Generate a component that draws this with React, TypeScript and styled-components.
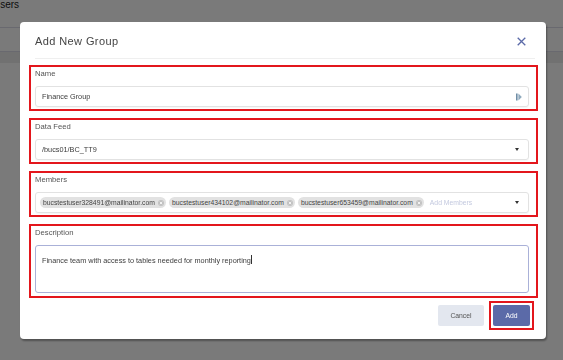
import React from 'react';
import styled, { createGlobalStyle } from 'styled-components';

const colors = {
    overlay: 'rgba(0, 0, 0, 0.52)',
    red: '#e3161c',
    blue: '#5b6aa8',
    text: '#3c3c3c',
    label: '#555',
    border: '#e2e2e2',
    chip: '#e2e2e2',
};

const GlobalStyle = createGlobalStyle`
    html, body {
        margin: 0;
        padding: 0;
        background: #fff;
        font-family: "Liberation Sans", Arial, sans-serif;
    }
`;

const Page = styled.div`
    width: 563px;
    height: 360px;
    overflow: hidden;
`;

const PageTitle = styled.div`
    margin-left: -7px;
    height: 28px;
    font-size: 10px;
    line-height: 9px;
    color: #222;
    border-bottom: 1px solid #dcdce8;
    box-sizing: border-box;
`;

const Toolbar = styled.div`
    height: 23px;
    border-bottom: 1px solid #dcdce8;
`;

const TableHead = styled.div`
    height: 11px;
    background: #ececec;
`;

const Overlay = styled.div`
    position: fixed;
    inset: 0;
    background: ${colors.overlay};
    padding: 22px 0 0 20px;
`;

const Modal = styled.div`
    width: 526px;
    background: #fff;
    border-radius: 4px;
    box-shadow: 1px 2px 2px rgba(0, 0, 0, 0.35);
    padding-bottom: 9px;
`;

const Header = styled.div`
    display: flex;
    align-items: center;
    justify-content: space-between;
    height: 37px;
    padding-top: 2px;
    box-sizing: border-box;
    margin: 0 11px 0 15px;
    border-bottom: 1px solid #efefef;
`;

const Title = styled.h2`
    margin: 0;
    font-size: 11px;
    font-weight: 400;
    letter-spacing: 0.4px;
    color: #444;
`;

const Close = styled.button`
    display: flex;
    border: none;
    background: none;
    padding: 0;
    margin-right: 9px;
    cursor: pointer;
`;

const Body = styled.div`
    display: flex;
    flex-direction: column;
    gap: 7px;
    padding: 6px 8px 0 9px;
`;

const Field = styled.div<{ tall?: boolean }>`
    border: 2px solid ${colors.red};
    padding: 1px 7px ${(p) => (p.tall ? 3 : 2)}px 4px;
`;

const Label = styled.div`
    font-size: 7.7px;
    line-height: 11px;
    color: ${colors.label};
    margin-bottom: 7px;
`;

const Control = styled.div<{ tall?: boolean; focused?: boolean }>`
    display: flex;
    align-items: ${(p) => (p.tall ? 'flex-start' : 'center')};
    box-sizing: border-box;
    height: ${(p) => (p.tall ? 48 : 21)}px;
    padding: ${(p) => (p.tall ? '9px 6px' : '0 6px 0 6px')};
    border: 1px solid ${(p) => (p.focused ? '#aab1d8' : colors.border)};
    border-radius: 3px;
    box-shadow: ${(p) => (p.focused ? 'none' : '0 1px 1px rgba(0,0,0,0.04)')};
    font-size: 7.3px;
    color: ${colors.text};
    gap: 3px;
`;

const Value = styled.span`
    flex: 1;
    white-space: nowrap;
`;

const Caret = styled.span`
    width: 0;
    height: 0;
    border-left: 2.5px solid transparent;
    border-right: 2.5px solid transparent;
    border-top: 3px solid #333;
    margin-right: 3px;
`;

const Chip = styled.span`
    display: inline-flex;
    align-items: center;
    gap: 3px;
    height: 11px;
    padding: 0 2px 0 3px;
    border-radius: 6px;
    background: ${colors.chip};
    font-size: 6.8px;
    color: #444;
    white-space: nowrap;
`;

const Placeholder = styled.span`
    flex: 1;
    margin-left: 3px;
    font-size: 6.8px;
    color: #c3c9df;
`;

const Cursor = styled.span`
    display: inline-block;
    width: 1px;
    height: 9px;
    background: #333;
    vertical-align: -1px;
`;

const Footer = styled.div`
    display: flex;
    justify-content: flex-end;
    align-items: center;
    gap: 5px;
    margin-top: 3px;
    padding-right: 12px;
`;

const Highlight = styled.div`
    border: 2px solid ${colors.red};
    padding: 2px;
    display: flex;
`;

const Button = styled.button<{ primary?: boolean }>`
    height: 21px;
    width: ${(p) => (p.primary ? 37 : 46)}px;
    border: none;
    border-radius: 2px;
    font-family: inherit;
    font-size: 6.8px;
    color: ${(p) => (p.primary ? '#fff' : '#555')};
    background: ${(p) => (p.primary ? colors.blue : '#e3e7ef')};
    cursor: pointer;
`;

const ChipClose = () => (
    <svg width="6" height="6" viewBox="0 0 6 6">
        <circle cx="3" cy="3" r="3" fill="#c2c2c2" />
        <path d="M1.8 1.8 L4.2 4.2 M4.2 1.8 L1.8 4.2" stroke="#fff" strokeWidth="0.8" />
    </svg>
);

const FillIcon = () => (
    <svg width="6" height="8" viewBox="0 0 6 8">
        <rect x="0" y="0.5" width="1.6" height="7" fill="#6f8ea6" />
        <path d="M2.4 0.5 L2.4 7.5 L5.8 4 Z" fill="#8fa9bd" />
    </svg>
);

const members = [
    'bucstestuser328491@mailinator.com',
    'bucstestuser434102@mailinator.com',
    'bucstestuser653459@mailinator.com',
];

export default function App() {
    return (
        <>
            <GlobalStyle />
            <Page>
                <PageTitle>Users</PageTitle>
                <Toolbar />
                <TableHead />
            </Page>
            <Overlay>
                <Modal>
                    <Header>
                        <Title>Add New Group</Title>
                        <Close aria-label="Close">
                            <svg width="9" height="9" viewBox="0 0 9 9">
                                <path
                                    d="M0.7 0.7 L8.3 8.3 M8.3 0.7 L0.7 8.3"
                                    stroke={colors.blue}
                                    strokeWidth="1.3"
                                />
                            </svg>
                        </Close>
                    </Header>
                    <Body>
                        <Field>
                            <Label>Name</Label>
                            <Control>
                                <Value>Finance Group</Value>
                                <FillIcon />
                            </Control>
                        </Field>
                        <Field>
                            <Label>Data Feed</Label>
                            <Control>
                                <Value>/bucs01/BC_TT9</Value>
                                <Caret />
                            </Control>
                        </Field>
                        <Field>
                            <Label>Members</Label>
                            <Control style={{ paddingLeft: 4 }}>
                                {members.map((m) => (
                                    <Chip key={m}>
                                        {m}
                                        <ChipClose />
                                    </Chip>
                                ))}
                                <Placeholder>Add Members</Placeholder>
                                <Caret />
                            </Control>
                        </Field>
                        <Field tall>
                            <Label>Description</Label>
                            <Control tall focused>
                                <span>
                                    Finance team with access to tables needed for monthly reporting
                                    <Cursor />
                                </span>
                            </Control>
                        </Field>
                    </Body>
                    <Footer>
                        <Button type="button">Cancel</Button>
                        <Highlight>
                            <Button type="button" primary>
                                Add
                            </Button>
                        </Highlight>
                    </Footer>
                </Modal>
            </Overlay>
        </>
    );
}
